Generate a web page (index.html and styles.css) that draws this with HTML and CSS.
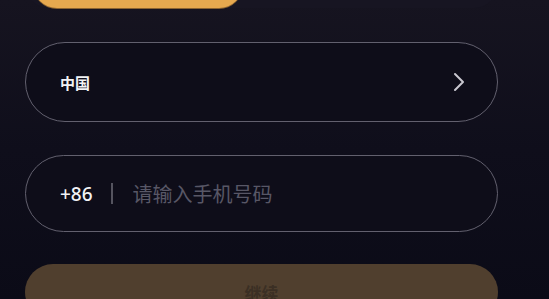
FILE: index.html
```html
<html lang="zh-CN">
<head>
  <meta charset="UTF-8">
  <meta name="viewport" content="width=device-width, initial-scale=1.0">
  <title>登录</title>
  <link rel="stylesheet" href="styles.css">
</head>
<body>
  <div class="container">
    <div class="tabs">
      <div class="tab active"></div>
      <div class="tab"></div>
    </div>

    <div class="field region">
      <span class="region-name">中国</span>
      <svg class="chevron" width="12" height="20" viewBox="0 0 12 20">
        <path d="M2 2 L10 10 L2 18" fill="none" stroke="#c9c8d0" stroke-width="2" stroke-linecap="round" stroke-linejoin="round"/>
      </svg>
    </div>

    <div class="field phone">
      <span class="code">+86</span>
      <span class="divider"></span>
      <input type="text" placeholder="请输入手机号码">
    </div>

    <button class="submit">继续</button>
  </div>
</body>
</html>
```

FILE: styles.css
```css
body {
  margin: 0;
  padding: 0;
  height: 299px;
  overflow: hidden;
  background: linear-gradient(180deg, #161420 0%, #0f0e1b 50%, #0b0b17 100%);
  font-family: "Noto Sans CJK SC", "Noto Sans", sans-serif;
  color: #fff;
}

.container {
  width: 473px;
  margin-left: 25px;
  display: flex;
  flex-direction: column;
}

.tabs {
  height: 48px;
  margin-top: -40px;
  display: flex;
  gap: 10px;
  padding: 0 8px;
  border-radius: 24px;
  background: #171522;
}

.tab {
  flex: 1;
  border-radius: 0 0 24px 24px;
}

.tab.active {
  flex: 0 0 210px;
  background: #e6a94f;
  box-shadow: 0 1px 0 #8a6330;
}

.field {
  height: 77px;
  box-sizing: border-box;
  border: 1.5px solid #62606e;
  border-radius: 40px;
  background: #0e0d19;
  display: flex;
  align-items: center;
  padding: 0 32px 0 34px;
}

.region {
  margin-top: 34px;
  height: 80px;
  justify-content: space-between;
}

.region-name {
  font-size: 15px;
  font-weight: bold;
  color: #f2f2f5;
}

.chevron {
  display: block;
}

.phone {
  margin-top: 33px;
}

.code {
  font-family: "Noto Sans", sans-serif;
  font-size: 19px;
  font-weight: 500;
  color: #f2f2f5;
}

.divider {
  width: 2px;
  height: 21px;
  background: #55545f;
  margin: 0 20px 0 18px;
}

input {
  flex: 1;
  border: none;
  outline: none;
  background: transparent;
  font-family: "Noto Sans CJK SC", sans-serif;
  font-size: 20px;
  color: #fff;
  padding: 0;
}

input::placeholder {
  color: #585766;
}

.submit {
  margin-top: 32px;
  height: 56px;
  border: none;
  border-radius: 28px;
  background: #503f2e;
  color: #3b2f24;
  font-family: "Noto Sans CJK SC", sans-serif;
  font-size: 17px;
  font-weight: bold;
  padding: 0;
}
```
